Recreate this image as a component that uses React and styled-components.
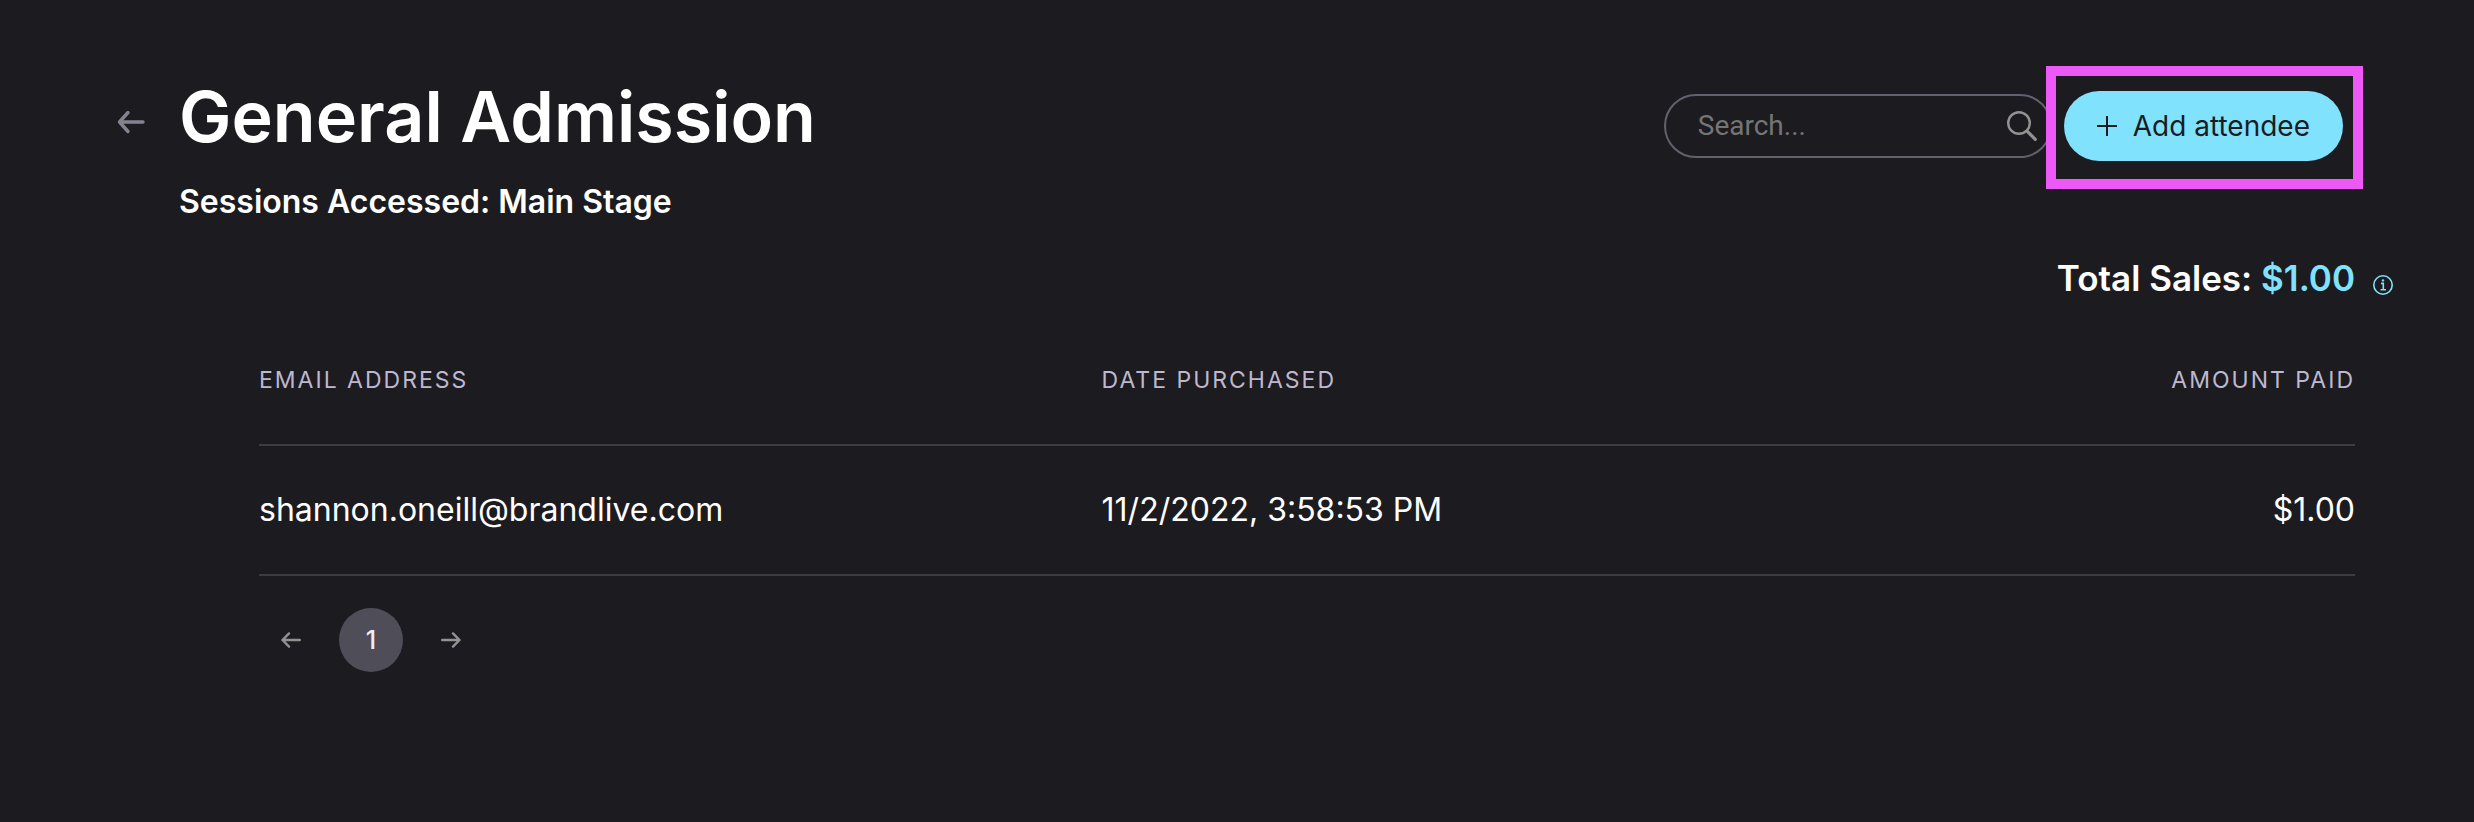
import React from "react";
import styled, { createGlobalStyle } from "styled-components";

const GlobalStyle = createGlobalStyle`
  *, *::before, *::after { box-sizing: border-box; }
  body {
    margin: 0;
    background: #1c1b1f;
    color: #ffffff;
    font-family: Inter, "Liberation Sans", sans-serif;
  }
  button, input { font-family: inherit; margin: 0; }
`;

const Page = styled.main`
  min-height: 100vh;
  padding: 78px 0 80px;
`;

const Header = styled.header`
  display: flex;
  align-items: flex-start;
  justify-content: space-between;
  padding: 0 131px 0 107px;
`;

const Heading = styled.div`
  display: flex;
  align-items: flex-start;
  gap: 24px;
`;

const IconButton = styled.button`
  display: inline-flex;
  align-items: center;
  justify-content: center;
  flex: none;
  width: ${(p) => p.$size}px;
  height: ${(p) => p.$size}px;
  padding: 0;
  border: 0;
  border-radius: 50%;
  background: ${(p) => (p.$active ? "#4f4d57" : "transparent")};
  color: ${(p) => p.$color};
  font-size: 25px;
  font-weight: 500;
  cursor: pointer;
`;

const BackButton = styled(IconButton)`
  margin-top: 20px;
`;

const Title = styled.h1`
  margin: 0 0 22px;
  font-size: 70px;
  line-height: 78px;
  font-weight: 600;
`;

const Subtitle = styled.p`
  margin: 0;
  font-size: 32px;
  line-height: 48px;
  font-weight: 600;
`;

const Actions = styled.div`
  display: flex;
  align-items: center;
  gap: 12px;
  padding-top: 13px;
`;

const SearchField = styled.label`
  display: flex;
  align-items: center;
  width: 388px;
  height: 64px;
  padding: 0 12px 0 32px;
  border: 2px solid #636070;
  border-radius: 32px;
  color: #929292;
`;

const SearchInput = styled.input`
  flex: 1;
  min-width: 0;
  padding: 0;
  border: 0;
  outline: 0;
  background: transparent;
  color: #ffffff;
  font-family: Roboto, sans-serif;
  font-size: 28px;
  line-height: 40px;
  &::placeholder { color: #757575; opacity: 1; }
`;

const Highlight = styled.div`
  position: relative;
  display: flex;
  &::after {
    content: "";
    position: absolute;
    inset: -25px -20px -28px -18px;
    border: 10px solid #ec59f6;
    pointer-events: none;
  }
`;

const AddButton = styled.button`
  display: flex;
  align-items: center;
  gap: 16px;
  height: 70px;
  padding: 0 33px;
  border: 0;
  border-radius: 35px;
  background: #80e2fc;
  color: #1c1b1f;
  font-size: 28px;
  white-space: nowrap;
  cursor: pointer;
`;

const Totals = styled.div`
  display: flex;
  align-items: center;
  justify-content: flex-end;
  gap: 18px;
  margin-top: 28px;
  padding-right: 81px;
  color: #80e2fc;
  svg { margin-top: 14px; }
`;

const TotalText = styled.p`
  margin: 0;
  color: #ffffff;
  font-size: 35px;
  line-height: 48px;
  font-weight: 600;
`;

const Amount = styled.span`
  color: #80e2fc;
`;

const Content = styled.section`
  margin: 62px 119px 0 259px;
`;

const Table = styled.table`
  width: 100%;
  table-layout: fixed;
  border-collapse: separate;
  border-spacing: 0;
`;

const HeadCell = styled.th`
  width: ${(p) => p.$width};
  padding: 0 0 48px;
  border-bottom: 2px solid #3d3c41;
  color: #bdb8d0;
  font-size: 23px;
  line-height: 32px;
  font-weight: 400;
  letter-spacing: 2px;
  text-transform: uppercase;
  text-align: ${(p) => p.$align || "left"};
`;

const Cell = styled.td`
  padding: 40px 0;
  border-bottom: 2px solid #3d3c41;
  font-size: 32px;
  line-height: 48px;
  text-align: ${(p) => p.$align || "left"};
`;

const Pagination = styled.nav`
  display: flex;
  gap: 16px;
  margin-top: 32px;
`;

const BackArrow = () => (
  <svg width="28" height="24" viewBox="0 0 28 24" fill="none" stroke="currentColor"
    strokeWidth="3.4" strokeLinecap="round" strokeLinejoin="round" aria-hidden="true">
    <path d="M26 12H2.5M11 2.5L2.5 12L11 21.5" />
  </svg>
);

const PageArrow = ({ next }) => (
  <svg width="20" height="16" viewBox="0 0 20 16" fill="none" stroke="currentColor"
    strokeWidth="2.4" strokeLinecap="round" strokeLinejoin="round" aria-hidden="true">
    <path d={next ? "M1.2 8H18.5M12 1.4L18.5 8L12 14.6" : "M18.8 8H1.5M8 1.4L1.5 8L8 14.6"} />
  </svg>
);

const SearchIcon = () => (
  <svg width="32" height="32" viewBox="0 0 32 32" fill="none" stroke="currentColor" strokeLinecap="round" aria-hidden="true">
    <circle cx="13" cy="13" r="10.8" strokeWidth="2.4" />
    <path d="M21.3 21.3L29.3 29.3" strokeWidth="3.2" />
  </svg>
);

const PlusIcon = () => (
  <svg width="20" height="20" viewBox="0 0 20 20" stroke="currentColor" strokeWidth="2" aria-hidden="true">
    <path d="M10 0V20M0 10H20" />
  </svg>
);

const InfoIcon = () => (
  <svg width="20" height="20" viewBox="0 0 20 20" fill="none" stroke="currentColor" role="img" aria-label="About total sales">
    <circle cx="10" cy="10" r="9.2" strokeWidth="1.6" />
    <path d="M8 8.4H10.3V14.6M7.5 14.8H13" strokeWidth="1.6" />
    <circle cx="10" cy="5.4" r="1.2" fill="currentColor" stroke="none" />
  </svg>
);

const attendees = [
  { email: "shannon.oneill@brandlive.com", date: "11/2/2022, 3:58:53 PM", paid: "$1.00" },
];

export default function App() {
  return (
    <>
      <GlobalStyle />
      <Page>
        <Header>
          <Heading>
            <BackButton type="button" $size={48} $color="#84828f" aria-label="Back">
              <BackArrow />
            </BackButton>
            <div>
              <Title>General Admission</Title>
              <Subtitle>Sessions Accessed: Main Stage</Subtitle>
            </div>
          </Heading>
          <Actions>
            <SearchField>
              <SearchInput type="text" placeholder="Search..." aria-label="Search" />
              <SearchIcon />
            </SearchField>
            <Highlight>
              <AddButton type="button">
                <PlusIcon />
                Add attendee
              </AddButton>
            </Highlight>
          </Actions>
        </Header>

        <Totals>
          <TotalText>Total Sales: <Amount>$1.00</Amount></TotalText>
          <InfoIcon />
        </Totals>

        <Content>
          <Table>
            <thead>
              <tr>
                <HeadCell scope="col" $width="40.2%">Email address</HeadCell>
                <HeadCell scope="col" $width="40.2%">Date purchased</HeadCell>
                <HeadCell scope="col" $align="right">Amount paid</HeadCell>
              </tr>
            </thead>
            <tbody>
              {attendees.map((a) => (
                <tr key={a.email}>
                  <Cell>{a.email}</Cell>
                  <Cell>{a.date}</Cell>
                  <Cell $align="right">{a.paid}</Cell>
                </tr>
              ))}
            </tbody>
          </Table>
          <Pagination aria-label="Pages">
            <IconButton type="button" $size={64} $color="#929292" aria-label="Previous page">
              <PageArrow />
            </IconButton>
            <IconButton type="button" $size={64} $color="#eeedf2" $active aria-current="page">1</IconButton>
            <IconButton type="button" $size={64} $color="#929292" aria-label="Next page">
              <PageArrow next />
            </IconButton>
          </Pagination>
        </Content>
      </Page>
    </>
  );
}
